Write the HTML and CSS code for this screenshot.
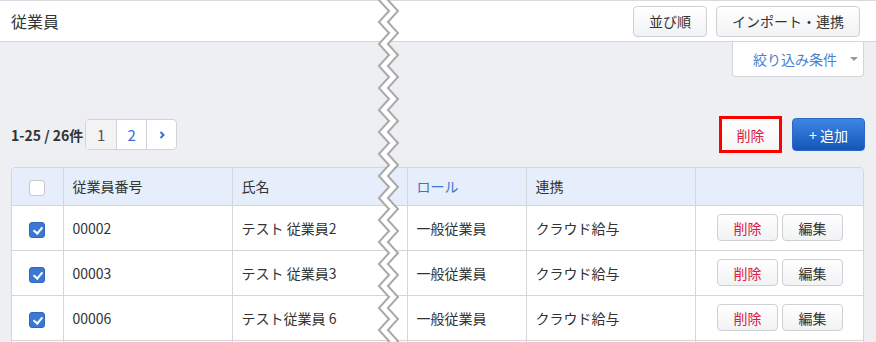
FILE: index.html
```html
<!DOCTYPE html>
<html lang="ja">
<head>
<meta charset="utf-8">
<link rel="stylesheet" href="styles.css">
</head>
<body>
<div class="page">
  <header class="topbar">
    <h1 class="title">従業員</h1>
    <div class="top-actions">
      <button class="btn">並び順</button>
      <button class="btn">インポート・連携</button>
    </div>
  </header>
  <div class="filter-row">
    <div class="filter">絞り込み条件<span class="caret"></span></div>
  </div>
  <div class="toolbar">
    <div class="count-area">
      <span class="count">1-25 / 26件</span>
      <nav class="pager">
        <span class="pg active">1</span>
        <span class="pg">2</span>
        <span class="pg"><svg width="8" height="10" viewBox="0 0 8 10"><path d="M2.5 2 L5.5 5 L2.5 8" fill="none" stroke="#3a6fd0" stroke-width="2"/></svg></span>
      </nav>
    </div>
    <div class="tool-actions">
      <div class="highlight"><button class="btn del-main">削除</button></div>
      <button class="btn-primary">+ 追加</button>
    </div>
  </div>
  <div class="table-wrap">
    <table class="grid">
      <colgroup>
        <col class="c-check"><col class="c-no"><col class="c-name"><col class="c-role"><col class="c-link"><col class="c-act">
      </colgroup>
      <thead>
        <tr>
          <th class="chk"><span class="cb"></span></th>
          <th>従業員番号</th>
          <th>氏名</th>
          <th class="sort">ロール</th>
          <th>連携</th>
          <th></th>
        </tr>
      </thead>
      <tbody>
        <tr>
          <td class="chk"><span class="cb on"></span></td>
          <td>00002</td>
          <td>テスト 従業員2</td>
          <td>一般従業員</td>
          <td>クラウド給与</td>
          <td class="act"><button class="btn sm danger">削除</button><button class="btn sm">編集</button></td>
        </tr>
        <tr>
          <td class="chk"><span class="cb on"></span></td>
          <td>00003</td>
          <td>テスト 従業員3</td>
          <td>一般従業員</td>
          <td>クラウド給与</td>
          <td class="act"><button class="btn sm danger">削除</button><button class="btn sm">編集</button></td>
        </tr>
        <tr>
          <td class="chk"><span class="cb on"></span></td>
          <td>00006</td>
          <td>テスト従業員 6</td>
          <td>一般従業員</td>
          <td>クラウド給与</td>
          <td class="act"><button class="btn sm danger">削除</button><button class="btn sm">編集</button></td>
        </tr>
        <tr class="next">
          <td class="chk"></td>
          <td></td>
          <td></td>
          <td></td>
          <td></td>
          <td></td>
        </tr>
      </tbody>
    </table>
  </div>
  <svg class="zigzag" width="26" height="342" viewBox="0 0 26 342">
    <defs>
      <pattern id="zz" width="26" height="22" patternUnits="userSpaceOnUse">
        <polygon points="3,0 14,11 3,22 12,22 23,11 12,0" fill="#fff"/>
        <polyline points="3,-1 14,11 3,23" fill="none" stroke="#a9a9a9" stroke-width="2"/>
        <polyline points="12,-1 23,11 12,23" fill="none" stroke="#a9a9a9" stroke-width="2"/>
      </pattern>
    </defs>
    <rect x="0" y="0" width="26" height="342" fill="url(#zz)"/>
  </svg>
</div>
</body>
</html>
```

FILE: styles.css
```css
* { box-sizing: border-box; }
html, body { margin: 0; padding: 0; }
body {
  font-family: "Noto Sans CJK JP", "Noto Sans", sans-serif;
  font-size: 14px;
  color: #333;
  background: #eeeff3;
}
.page {
  position: relative;
  width: 876px;
  height: 342px;
  overflow: hidden;
}
.topbar {
  height: 42px;
  background: #fff;
  border-top: 1px solid #d9dade;
  border-bottom: 1px solid #d4d5da;
  display: flex;
  align-items: center;
  justify-content: space-between;
  padding: 0 16px 0 11px;
}
.title {
  margin: 0;
  font-size: 16px;
  font-weight: normal;
  color: #333;
  line-height: 1;
}
.top-actions { display: flex; gap: 9px; }
.btn {
  font-family: inherit;
  font-size: 14px;
  color: #333;
  height: 31px;
  padding: 0 15px;
  border: 1px solid #cfd0d4;
  border-radius: 4px;
  background: linear-gradient(#ffffff, #f1f2f4);
  line-height: 1;
  cursor: pointer;
}
.filter-row {
  display: flex;
  justify-content: flex-end;
  padding-right: 12px;
}
.filter {
  width: 132px;
  height: 35px;
  background: #fff;
  border: 1px solid #d4d5da;
  border-top: none;
  border-radius: 0 0 4px 4px;
  color: #4a7fd4;
  display: flex;
  align-items: center;
  padding-left: 20px;
  line-height: 1;
}
.caret {
  width: 0;
  height: 0;
  border-left: 4px solid transparent;
  border-right: 4px solid transparent;
  border-top: 4px solid #999;
  margin-left: 13px;
}
.toolbar {
  margin-top: 39px;
  height: 37px;
  display: flex;
  align-items: center;
  justify-content: space-between;
  padding: 0 11px 0 11px;
}
.count-area { display: flex; align-items: center; gap: 2px; }
.count { font-weight: bold; font-size: 14px; color: #333; }
.pager {
  display: flex;
  border: 1px solid #d2d3d8;
  border-radius: 4px;
  overflow: hidden;
  height: 31px;
  background: #fff;
}
.pg {
  width: 30px;
  display: flex;
  align-items: center;
  justify-content: center;
  color: #3a6fd0;
  font-size: 15px;
  border-left: 1px solid #d2d3d8;
}
.pg:first-child { border-left: none; }
.pg.active { background: #f3f3f4; color: #555; }
.tool-actions { display: flex; align-items: center; gap: 10px; }
.highlight {
  border: 3px solid #ff0000;
  height: 37px;
  width: 63px;
  display: flex;
}
.del-main {
  width: 100%;
  height: 100%;
  border: none;
  border-radius: 0;
  background: linear-gradient(#ffffff, #f6f6f7);
  color: #d7213f;
  padding: 0;
}
.btn-primary {
  font-family: inherit;
  font-size: 14px;
  height: 33px;
  width: 73px;
  border: 1px solid #2b67c6;
  border-radius: 4px;
  background: linear-gradient(#3f86e4, #1456b8);
  color: #fff;
  line-height: 1;
  padding: 0;
}
.table-wrap {
  margin: 14px 12px 0 11px;
  border: 1px solid #d4d6dc;
  border-radius: 4px;
  overflow: hidden;
  background: #fff;
}
.grid {
  width: 100%;
  border-collapse: collapse;
  table-layout: fixed;
}
.c-check { width: 51px; }
.c-no { width: 169px; }
.c-name { width: 175px; }
.c-role { width: 119px; }
.c-link { width: 169px; }
.c-act { width: auto; }
.grid th {
  height: 37px;
  background: #e5eefa;
  font-weight: normal;
  text-align: left;
  padding: 0 9px;
  color: #333;
  border-left: 1px solid #d4d6dc;
  border-bottom: 1px solid #d4d6dc;
}
.grid th.sort { color: #3a74d0; }
.grid td {
  height: 45px;
  padding: 0 9px;
  border-left: 1px solid #d4d6dc;
  border-bottom: 1px solid #d4d6dc;
  color: #333;
}
.grid th:first-child, .grid td:first-child { border-left: none; }
.grid .chk { text-align: center; padding: 0; }
.cb {
  display: inline-block;
  width: 16px;
  height: 16px;
  border: 1px solid #c5c7cc;
  border-radius: 3px;
  background: #fff;
  vertical-align: middle;
  position: relative;
}
.cb.on {
  background: #3b78d4;
  border-color: #2f68c2;
}
.cb.on::after {
  content: "";
  position: absolute;
  left: 4.5px;
  top: 2px;
  width: 4px;
  height: 7px;
  border-right: 2px solid #fff;
  border-bottom: 2px solid #fff;
  transform: rotate(40deg);
}
.grid td.act { text-align: right; padding-right: 20px; }
.btn.sm {
  height: 27px;
  width: 61px;
  padding: 0;
  margin-left: 4px;
  font-size: 14px;
}
.btn.danger { color: #d7213f; }
.zigzag {
  position: absolute;
  left: 375px;
  top: 0;
}
```
